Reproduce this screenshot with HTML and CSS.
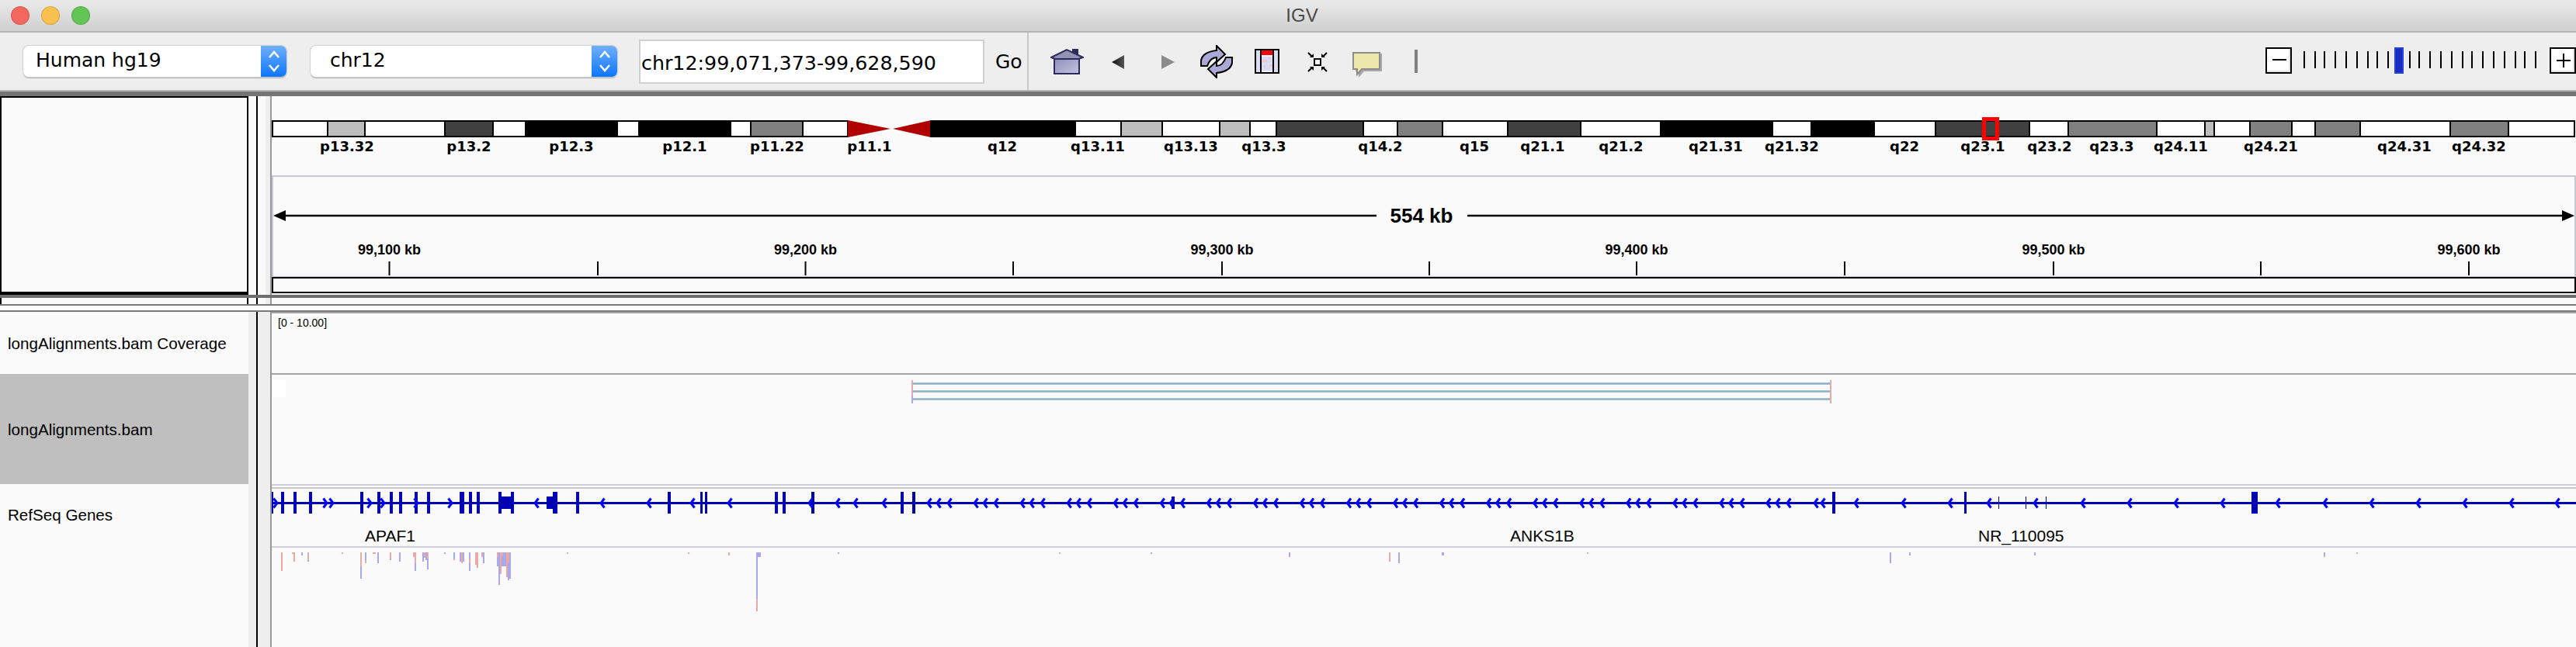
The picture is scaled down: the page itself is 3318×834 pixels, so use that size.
FILE: index.html
```html
<!DOCTYPE html>
<html lang="en">
<head>
  <meta charset="UTF-8" />
  <title>IGV</title>
  <link rel="stylesheet" href="styles.css">
</head>
<body>

  <!-- Window title -->
  <div class="titlebar">
    <div class="lights">
      <span class="light red"></span>
      <span class="light yellow"></span>
      <span class="light green"></span>
    </div>
    <div class="title">IGV</div>
  </div>

  <!-- Toolbar -->
  <div class="toolbar">
    <div class="locus">
      <div class="select genome">
        <span class="select-text">Human hg19</span>
        <span class="stepper">
          <svg width="16" height="30" viewBox="0 0 16 30"><path d="M2 10L8 3L14 10M2 20L8 27L14 20"/></svg>
        </span>
      </div>
      <div class="select chrom">
        <span class="select-text">chr12</span>
        <span class="stepper">
          <svg width="16" height="30" viewBox="0 0 16 30"><path d="M2 10L8 3L14 10M2 20L8 27L14 20"/></svg>
        </span>
      </div>
      <div class="search">chr12:99,071,373-99,628,590</div>
      <div class="go">Go</div>
    </div>

    <div class="tools">
      <svg class="tool home" width="43" height="35" viewBox="0 0 43 35">
        <defs>
          <linearGradient id="homeBody" x1="0" y1="0" x2="1" y2="1">
            <stop offset="0" stop-color="#8f8fbe"/>
            <stop offset="1" stop-color="#c4c4de"/>
          </linearGradient>
        </defs>
        <path d="M28 1h8v9h-8z" fill="#2c2c60"/>
        <path d="M1 12L21 2L42 12L36 14H6z" fill="#9393b2" stroke="#2c2c60" stroke-width="2"/>
        <path d="M5 14H37V33H5z" fill="url(#homeBody)" stroke="#2c2c60" stroke-width="2"/>
        <path d="M3 34.5H39" stroke="#fff" stroke-dasharray="2 2"/>
      </svg>
      <svg class="tool back" width="16" height="18" viewBox="0 0 16 18">
        <defs>
          <linearGradient id="backFill" x1="0" y1="0" x2="1" y2="0">
            <stop offset="0" stop-color="#111"/>
            <stop offset="1" stop-color="#555"/>
          </linearGradient>
        </defs>
        <path d="M16 0V18L0 9z" fill="url(#backFill)"/>
      </svg>
      <svg class="tool forward" width="17" height="18" viewBox="0 0 17 18">
        <path d="M0 0V18L17 9z" fill="#8c8c8c"/>
      </svg>
      <svg class="tool refresh" width="42" height="43" viewBox="0 0 42 43">
        <g fill="#a9a9d6" stroke="#000" stroke-width="2" stroke-linejoin="miter">
          <path d="M1 27V20Q3 9 21 7V1L32 12L21 22V16Q13 16 9 27z"/>
          <path d="M41 16V23Q39 34 21 36V42L10 31L21 21V27Q29 27 33 16z"/>
        </g>
      </svg>
      <svg class="tool heat" width="32" height="32" viewBox="0 0 32 32">
        <path d="M0 0H32V32H0z" fill="#000"/>
        <path d="M2 2H30V30H2z" fill="#f4f4fb"/>
        <path d="M2 2H7V30H2zM25 2H30V30H25z" fill="#dcdcf4"/>
        <path d="M9 10H24V28H9z" fill="#d6dcf6"/>
        <path d="M10 14H16V17H10zM19 20H23V23H19zM12 21H14V24H12zM18 11H20V14H18z" fill="#f3c6c2"/>
        <path d="M7 2H9V30H7zM23 2H25V30H23z" fill="#000"/>
        <path d="M9 2H23V8H9z" fill="#f00"/>
      </svg>
      <svg class="tool collapse" width="26" height="26" viewBox="0 0 26 26">
        <path d="M9 9H17V17H9z" fill="#fff" stroke="#000" stroke-width="2"/>
        <path d="M1 1L6 6M25 1L20 6M1 25L6 20M25 25L20 20" stroke="#000" stroke-width="2"/>
        <path d="M3 7H8V2zM23 7H18V2zM3 19H8V24zM23 19H18V24z" fill="#000"/>
      </svg>
      <svg class="tool comment" width="38" height="33" viewBox="0 0 38 33">
        <path d="M4 2H38V25H15L8 33V25H4z" fill="#a8a8a8"/>
        <path d="M1 1H35V22H12L6 29V22H1z" fill="#ece6a8" stroke="#8c8c8c" stroke-width="2"/>
      </svg>
      <div class="tool divider"></div>
    </div>

    <div class="zoom">
      <div class="zoom-btn"><svg width="30" height="30" viewBox="0 0 30 30"><path d="M7 14H25"/></svg></div>
      <svg class="zoom-track" width="332" height="34" viewBox="0 0 332 34">
        <path class="ticks" d="M16 5V27M30 5V27M42 5V27M56 5V27M70 5V27M84 5V27M98 5V27M110 5V27M124 5V27M152 5V27M164 5V27M178 5V27M192 5V27M206 5V27M220 5V27M232 5V27M246 5V27M260 5V27M274 5V27M288 5V27M300 5V27M314 5V27"/>
        <rect x="132" y="0" width="12" height="34" fill="#2440e0"/>
        <rect x="134" y="2" width="8" height="30" fill="#1a2cc0"/>
      </svg>
      <div class="zoom-btn"><svg width="30" height="30" viewBox="0 0 30 30"><path d="M7 15H25M16 6V24"/></svg></div>
    </div>
  </div>

  <div class="band-top"></div>

  <!-- Cytoband and ruler -->
  <div class="row header-row">
    <div class="header-name"></div>
    <div class="gutter gutter-light"></div>
    <svg id="headerView" class="view" width="2968" height="256" viewBox="350 124 2968 256"></svg>
  </div>

  <div class="band-bottom"></div>

  <div class="row stub-row">
    <div class="stub-name"></div>
    <div class="gutter gutter-light"></div>
    <div class="stub-data"></div>
  </div>
  <div class="rule"></div>
  <div class="rule-gap"></div>
  <div class="rule"></div>

  <!-- Tracks -->
  <div class="row track-row">
    <div class="names">
      <div class="name coverage-name">longAlignments.bam Coverage</div>
      <div class="name alignment-name">longAlignments.bam</div>
      <div class="name gene-name">RefSeq Genes</div>
      <div class="name seq-name"></div>
    </div>
    <div class="gutter"></div>
    <svg id="trackView" class="view" width="2968" height="432" viewBox="350 402 2968 432"></svg>
  </div>

  <script src="tracks.js"></script>
</body>
</html>
```

FILE: styles.css
```css
* { margin: 0; padding: 0; box-sizing: border-box; }

body {
  width: 3318px;
  height: 834px;
  overflow: hidden;
  background: #fafafa;
  font-family: "Liberation Sans", Arial, sans-serif;
  color: #000;
}

/* title bar */
.titlebar {
  height: 42px;
  display: flex;
  align-items: center;
  justify-content: center;
  position: relative;
  background: linear-gradient(#ebebeb, #cfcfcf);
  border-bottom: 2px solid #b4b4b4;
}

.lights {
  position: absolute;
  left: 14px;
  top: 8px;
  display: flex;
  gap: 15px;
}

.light {
  width: 24px;
  height: 24px;
  border-radius: 50%;
  border: 1px solid rgba(0, 0, 0, 0.15);
}

.red { background: #f2685e; }
.yellow { background: #f8c04e; }
.green { background: #62c655; }

.title {
  font-size: 24px;
  color: #4a4a4a;
  margin-left: 36px;
}

/* toolbar */
.toolbar {
  height: 74px;
  display: flex;
  background: #eeeeee;
}

.locus {
  width: 1325px;
  height: 74px;
  display: flex;
  align-items: center;
  padding-left: 30px;
  border-right: 2px solid #c8c8c8;
  font-family: "DejaVu Sans", sans-serif;
  font-size: 25px;
}

.select {
  height: 40px;
  display: flex;
  justify-content: space-between;
  background: #fff;
  border-radius: 7px;
  box-shadow: 0 0 1px 1px #d0d0d0, 0 2px 1px #b0b0b0;
  overflow: hidden;
}

.genome { width: 339px; }
.chrom { width: 395px; margin-left: 31px; }

.select-text { line-height: 38px; padding-left: 16px; }
.chrom .select-text { padding-left: 25px; }

.stepper {
  width: 33px;
  display: flex;
  align-items: center;
  justify-content: center;
  background: linear-gradient(#6fb0ff, #0b76ff);
}

.stepper path {
  fill: none;
  stroke: #fff;
  stroke-width: 2.5;
}

.search {
  width: 445px;
  height: 57px;
  margin-left: 28px;
  padding-left: 1px;
  line-height: 57px;
  font-size: 25.3px;
  background: #fff;
  border: 2px solid #d0d0d0;
  white-space: nowrap;
}

.go { margin-left: 14px; }

.tools {
  display: flex;
  align-items: center;
}

.tool { display: block; }
.home { margin-left: 28px; }
.back { margin-left: 36px; margin-top: 2px; }
.forward { margin-left: 48px; margin-top: 2px; }
.refresh { margin-left: 33px; }
.heat { margin-left: 28px; }
.collapse { margin-left: 36px; margin-top: 2px; }
.comment { margin-left: 32px; margin-top: 8px; }

.divider {
  width: 4px;
  height: 30px;
  margin-left: 42px;
  background: #808080;
}

.zoom {
  margin-left: auto;
  display: flex;
  align-items: center;
  height: 74px;
  padding-bottom: 2px;
}

.zoom-btn {
  width: 34px;
  height: 34px;
  background: #fff;
  border: 2px solid #000;
  box-shadow: inset -2px -2px 0 #e4e4e4;
}

.zoom-btn svg { display: block; }

.zoom-btn path {
  fill: none;
  stroke: #000;
  stroke-width: 2;
}

.zoom-track { display: block; }

.ticks {
  fill: none;
  stroke: #000;
  stroke-width: 2;
}

/* heavy separators */
.band-top {
  height: 8px;
  background: #747474;
  border-top: 2px solid #b4b4b4;
}

.band-bottom {
  height: 4px;
  background: #6e6e6e;
}

/* name / gutter / data columns */
.row {
  display: grid;
  grid-template-columns: 320px 30px 2968px;
}

.header-row { height: 256px; background: #fafafa; }
.stub-row { height: 8px; background: #fafafa; }
.track-row { height: 432px; background: #eeeeee; }

.gutter {
  margin-left: 10px;
  border-left: 2px solid #000;
  border-right: 2px solid #999999;
  background: #eeeeee;
}

.gutter-light {
  background: linear-gradient(to right, #fafafa 10px, #eeeeee 10px);
}

.view {
  display: block;
  background: #fafafa;
}

.header-name {
  border: 2px solid #000;
  border-bottom-width: 4px;
  background: #fafafa;
}

.stub-name {
  border-left: 2px solid #000;
  border-right: 2px solid #000;
}

.stub-data { background: #fafafa; }

.rule {
  height: 2px;
  background: #7a7a7a;
}

.rule-gap {
  height: 6px;
  background: #fafafa;
}

/* track names */
.names {
  display: flex;
  flex-direction: column;
  background: #fafafa;
}

.name {
  display: flex;
  align-items: center;
  padding-left: 10px;
  font-size: 20.6px;
  white-space: nowrap;
}

.coverage-name { height: 80px; padding-top: 1px; }
.alignment-name { height: 142px; padding-top: 2px; background: #bfbfbf; }
.gene-name { height: 80px; }
.seq-name { height: 130px; }

/* cytoband */
.gneg { fill: #fff; }
.gpos25 { fill: #bdbdbd; }
.gpos50 { fill: #808080; }
.gpos75 { fill: #404040; }
.gpos100 { fill: #000; }
.band { stroke: #000; stroke-width: 2; }
.acen { fill: #b00000; }

.band-label {
  font-family: "DejaVu Sans", sans-serif;
  font-weight: bold;
  font-size: 18px;
  text-anchor: middle;
}

.locator {
  fill: none;
  stroke: #ff0000;
  stroke-width: 5;
}

/* ruler */
.ruler-box {
  fill: #fafafa;
  stroke: #c8c8d4;
  stroke-width: 2;
}

.ruler-bottom {
  fill: #fafafa;
  stroke: #000;
  stroke-width: 2;
}

.span-line {
  stroke: #000;
  stroke-width: 2.5;
}

.span-label {
  font-weight: bold;
  font-size: 26px;
  text-anchor: middle;
}

.tick-line {
  stroke: #000;
  stroke-width: 2;
}

.tick-label {
  font-weight: bold;
  font-size: 18px;
  text-anchor: middle;
}

/* tracks */
.track-line-grey { fill: #a4a4a4; }
.track-line-lilac { fill: #d0d0da; }
.track-line-soft { fill: #c8c8c8; }

.range-label { font-size: 14px; }
.gene-label { font-size: 21px; }

.exon { fill: #0000b2; }

.arrow {
  fill: none;
  stroke: #0000ff;
  stroke-width: 3;
}

.read { fill: #a4c2d2; }
.read-core { fill: #8db0c6; }
.pink { fill: #eaa9a9; }
.blue { fill: #a9a9ea; }
```

FILE: tracks.js
```js
const SVG_NS = "http://www.w3.org/2000/svg";
const header = document.getElementById("headerView");
const tracks = document.getElementById("trackView");

function add(parent, tag, attrs, text) {
  const el = document.createElementNS(SVG_NS, tag);
  for (const key in attrs) el.setAttribute(key, attrs[key]);
  if (text) el.textContent = text;
  parent.appendChild(el);
  return el;
}

function rect(parent, x, y, w, h, cls) {
  return add(parent, "rect", { x: x, y: y, width: w, height: h, class: cls });
}

// Cytoband: [end x, stain]
const bands = [
  [422, "gneg"], [470, "gpos25"], [573, "gneg"], [635, "gpos75"], [677, "gneg"],
  [795, "gpos100"], [823, "gneg"], [941, "gpos100"], [967, "gneg"], [1034, "gpos50"],
  [1092, "gneg"]
];
const qBands = [
  [1385, "gpos100"], [1444, "gneg"], [1497, "gpos25"], [1571, "gneg"], [1610, "gpos25"],
  [1644, "gneg"], [1756, "gpos75"], [1800, "gneg"], [1858, "gpos50"], [1942, "gneg"],
  [2036, "gpos75"], [2139, "gneg"], [2283, "gpos100"], [2333, "gneg"], [2414, "gpos100"],
  [2493, "gneg"], [2614, "gpos75"], [2664, "gneg"], [2778, "gpos50"], [2840, "gneg"],
  [2852, "gpos25"], [2898, "gneg"], [2952, "gpos50"], [2982, "gneg"], [3040, "gpos50"],
  [3156, "gneg"], [3231, "gpos50"], [3316, "gneg"]
];

function drawBands(list, start) {
  let x = start;
  list.forEach(([end, stain]) => {
    rect(header, x, 156, end - x, 20, "band " + stain);
    x = end;
  });
}

drawBands(bands, 351);
add(header, "polygon", { points: "1092,155 1147,166 1092,177", class: "acen" });
add(header, "polygon", { points: "1199,155 1150,166 1199,177", class: "acen" });
drawBands(qBands, 1199);
rect(header, 2555.5, 153.5, 17, 25, "locator");

const labels = [
  ["p13.32", 447], ["p13.2", 604], ["p12.3", 736], ["p12.1", 882], ["p11.22", 1001],
  ["p11.1", 1120], ["q12", 1291], ["q13.11", 1414], ["q13.13", 1534], ["q13.3", 1628],
  ["q14.2", 1778], ["q15", 1899], ["q21.1", 1987], ["q21.2", 2088], ["q21.31", 2210],
  ["q21.32", 2308], ["q22", 2453], ["q23.1", 2554], ["q23.2", 2640], ["q23.3", 2720],
  ["q24.11", 2809], ["q24.21", 2925], ["q24.31", 3097], ["q24.32", 3193]
];
labels.forEach(([name, x]) => {
  add(header, "text", { x: x, y: 195, class: "band-label" }, name);
});

// Ruler
rect(header, 351, 227, 2966, 130, "ruler-box");
rect(header, 351, 358, 2966, 19, "ruler-bottom");
add(header, "line", { x1: 360, y1: 278, x2: 1773, y2: 278, class: "span-line" });
add(header, "line", { x1: 1890, y1: 278, x2: 3308, y2: 278, class: "span-line" });
add(header, "polygon", { points: "352,278 368,271 368,285" });
add(header, "polygon", { points: "3316,278 3300,271 3300,285" });
add(header, "text", { x: 1831, y: 287, class: "span-label" }, "554 kb");

const rulerTicks = [501.5, 770, 1037.5, 1305, 1574, 1841, 2108, 2376, 2645, 2912, 3180];
rulerTicks.forEach((x, i) => {
  add(header, "line", { x1: x, y1: 337, x2: x, y2: 355, class: "tick-line" });
  if (i % 2 === 0) {
    const kb = (99100 + i * 50).toLocaleString("en-US");
    add(header, "text", { x: x, y: 328, class: "tick-label" }, kb + " kb");
  }
});

// Track separators and coverage range
rect(tracks, 350, 402, 2968, 2, "track-line-grey");
rect(tracks, 350, 481, 2968, 2, "track-line-grey");
rect(tracks, 350, 624, 2968, 2, "track-line-lilac");
rect(tracks, 350, 628, 2968, 2, "track-line-soft");
rect(tracks, 350, 704, 2968, 2, "track-line-lilac");
add(tracks, "text", { x: 358, y: 421, class: "range-label" }, "[0 - 10.00]");
add(tracks, "rect", { x: 351, y: 490, width: 17, height: 22, fill: "#fff" });

// Alignments
[494, 504, 514].forEach((y) => {
  rect(tracks, 1176, y - 1, 1181, 3, "read");
  rect(tracks, 1176, y, 1181, 1, "read-core");
});
[1174, 2357].forEach((x) => {
  rect(tracks, x, 490, 2, 20, "pink");
  rect(tracks, x, 510, 2, 10, x === 1174 ? "blue" : "pink");
});

// RefSeq genes
rect(tracks, 350, 647, 2968, 3, "exon");

const tallExons = [
  [350, 2], [362, 4], [378, 4], [398, 4], [464, 4], [486, 4], [502, 4], [514, 4], [534, 4],
  [550, 4], [592, 6], [604, 4], [614, 4], [642, 4], [658, 4], [712, 6], [742, 4], [860, 4],
  [902, 3], [908, 3], [998, 4], [1008, 4], [1045, 4], [1160, 4], [1175, 4], [2360, 4],
  [2530, 3], [2900, 8]
];
tallExons.forEach(([x, w]) => rect(tracks, x, 634, w, 28, "exon"));

const midExons = [[646, 12], [704, 8], [1509, 4], [2574, 1], [2609, 1], [2635, 1]];
midExons.forEach(([x, w]) => rect(tracks, x, 640, w, 16, "exon"));

function arrow(x, dir) {
  const d = "M" + (x - 2.5 * dir) + " 642.5L" + (x + 2 * dir) + " 648.5L" + (x - 2.5 * dir) + " 654.5";
  add(tracks, "path", { d: d, class: "arrow" });
}

[355, 419, 427, 476, 493, 536, 580].forEach((x) => arrow(x, 1));

const backward = [
  691, 776, 836, 892, 940, 1044, 1079, 1102, 1139, 2339, 2348, 2391, 2452, 2512, 2562, 2622,
  2683, 2743, 2803, 2863, 2934, 2995, 3055, 3115, 3175, 3235, 3294
];
for (let k = 0; k < 19; k++) {
  const x = 1197 + 60.05 * k;
  backward.push(x, x + 12, x + 26);
}
backward.forEach((x) => arrow(x, -1));

add(tracks, "text", { x: 470, y: 698, class: "gene-label" }, "APAF1");
add(tracks, "text", { x: 1945, y: 698, class: "gene-label" }, "ANKS1B");
add(tracks, "text", { x: 2548, y: 698, class: "gene-label" }, "NR_110095");

// Sequence / mismatch bars hanging from the top of the last track: [x, w, colour, length]
const bars = [
  [362, 2, "pink", 24], [376, 4, "pink", 2], [378, 2, "pink", 12], [388, 2, "blue", 4],
  [396, 2, "blue", 12], [396, 2, "pink", 10], [440, 2, "pink", 2], [464, 2, "blue", 34],
  [464, 2, "pink", 18], [470, 2, "pink", 14], [470, 2, "blue", 10], [480, 4, "pink", 2],
  [486, 2, "blue", 14], [502, 2, "blue", 10], [502, 2, "pink", 8], [514, 2, "blue", 12],
  [532, 4, "pink", 6], [534, 2, "blue", 24], [534, 2, "pink", 14], [544, 2, "blue", 12],
  [546, 2, "pink", 7], [548, 2, "blue", 10], [550, 2, "blue", 22], [550, 2, "pink", 8],
  [572, 2, "blue", 2], [584, 2, "pink", 10], [584, 2, "blue", 8], [592, 6, "blue", 12],
  [594, 2, "pink", 14], [604, 2, "blue", 24], [604, 2, "pink", 14], [604, 2, "blue", 8],
  [612, 4, "pink", 16], [614, 2, "pink", 20], [620, 4, "pink", 6], [622, 2, "blue", 14],
  [640, 18, "blue", 18], [642, 2, "blue", 42], [644, 2, "pink", 28], [640, 2, "pink", 6],
  [646, 2, "pink", 4], [652, 2, "pink", 32], [654, 2, "blue", 36], [656, 2, "blue", 34],
  [654, 2, "pink", 14], [730, 2, "pink", 2], [886, 2, "pink", 2], [938, 2, "pink", 4],
  [974, 6, "blue", 6], [974, 2, "pink", 76], [974, 2, "blue", 60], [1079, 2, "blue", 2],
  [1364, 2, "pink", 2], [1482, 2, "blue", 2], [1660, 2, "blue", 6], [1789, 2, "pink", 12],
  [1801, 2, "blue", 14], [1857, 3, "blue", 4], [2044, 2, "pink", 2], [2434, 2, "blue", 14],
  [2459, 2, "blue", 4], [2620, 2, "blue", 4], [2993, 2, "pink", 6], [2993, 2, "blue", 4],
  [3035, 2, "pink", 2]
];
bars.forEach(([x, w, colour, len]) => rect(tracks, x, 712, w, len, colour));
```
